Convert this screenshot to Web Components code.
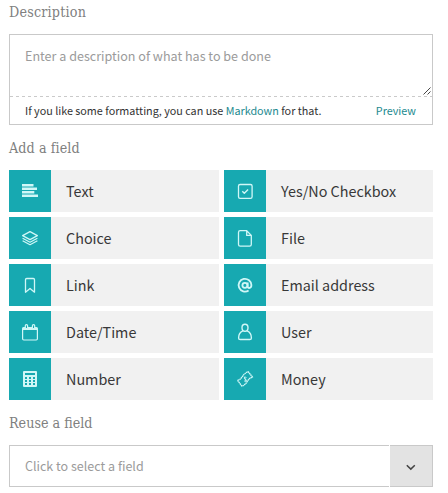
<!DOCTYPE html>
<html lang="en">
<head>
<meta charset="utf-8">
<title>Add fields</title>
<style>
  body { margin: 0; background: #fff; font-family: "Noto Sans CJK SC", "Noto Sans", sans-serif; color: #3a3a3a; }
</style>
</head>
<body>
<field-builder></field-builder>

<script>
const ICONS = {
  text: '<g fill="currentColor" stroke="none"><path d="M13 14h11.5v2.5H13zM13 17.5h15V20H13zM13 21h12.3v2.4H13zM13 24.4h16v2.5H13z"/></g>',
  choice: '<path d="M21 14.6l7.4 4-7.4 4-7.4-4zM13.6 21.2l7.4 4 7.4-4M13.6 23.7l7.4 4 7.4-4"/>',
  link: '<path d="M17.7 14.5h6.6q1.2 0 1.2 1.2v12.5L21 24.5l-4.5 3.7V15.7q0-1.2 1.2-1.2z" stroke-width="1.3"/>',
  date: '<rect x="13.6" y="16.6" width="14.8" height="12.4" rx="1.2"/><path d="M13.6 16.6h14.8v2.4H13.6z" fill="currentColor" stroke="none"/><rect x="16.3" y="13.6" width="2.3" height="4" rx="1.1" fill="#17a9b1"/><rect x="23.4" y="13.6" width="2.3" height="4" rx="1.1" fill="#17a9b1"/>',
  number: '<path fill="currentColor" stroke="none" fill-rule="evenodd" d="M15 13h12q1 0 1 1v14q0 1-1 1H15q-1 0-1-1V14q0-1 1-1zM16 15v2h10v-2zM16 19v2h2v-2zM20 19v2h2v-2zM24 19v2h2v-2zM16 22v2h2v-2zM20 22v2h2v-2zM24 22v2h2v-2zM16 25v2h2v-2zM20 25v2h2v-2zM24 25v2h2v-2z"/>',
  check: '<rect x="14.5" y="14.5" width="13.6" height="13.8" rx="1.6" stroke-width="1.3"/><path d="M18.3 21.2l2 2 3.8-3.8" stroke-width="1.4"/>',
  file: '<path d="M22.7 13.7h-6.5q-1.7 0-1.7 1.7v12q0 1.7 1.7 1.7h9.4q1.7 0 1.7-1.7v-9zM22.7 13.7v4.7h4.6" stroke-width="1.3"/>',
  email: '<g stroke-width="1.8"><circle cx="20.9" cy="21.3" r="2.5"/><path d="M23.7 18.4v3.8q0 1.8 1.6 1.8 2.1 0 2.1-2.9a6.4 6.4 0 1 0-2.8 5.4"/></g>',
  user: '<g stroke-width="1.4"><ellipse cx="21" cy="16.7" rx="3" ry="3.5"/><path d="M18.8 19.8c-2.7 1.2-4.2 3.5-4.2 7.1q0 1.6 1.7 1.6h9.4q1.7 0 1.7-1.6c0-3.6-1.5-5.9-4.2-7.1"/></g>',
  money: '<path d="M13.5 22.3c2.3-.5 3.5-1.7 4.8-3.7 1.4-2.2 3.2-3.8 5.8-4.9l4.5 5.4c-2.6.7-4 2.1-5.2 4.1-1.4 2.4-3 4-5.5 5z" stroke-dasharray="1.6 .35" stroke-width="1.3"/><path d="M22.5 19.6q-1.4-1-2.2.1-.4.9 1 1.4 1.5.6 1 1.7-.8 1.1-2.2.1M20.3 18.6l1.8 5" stroke-width=".9"/>'
};

function attach(host, markup) {
  const template = document.createElement('template');
  template.innerHTML = markup;
  host.attachShadow({ mode: 'open' }).appendChild(template.content.cloneNode(true));
}

class FormSection extends HTMLElement {
  constructor() {
    super();
    attach(this, `
      <style>
        :host { display: block; }
        h2 { margin: 0 0 10px; height: 24px; font: 400 14.2px/24px "DejaVu Serif Condensed", "DejaVu Serif", serif;
             font-stretch: condensed; letter-spacing: var(--title-tracking, 0); color: #808080; white-space: nowrap; }
      </style>
      <h2><slot name="title"></slot></h2>
      <slot></slot>`);
  }
}

class DescriptionBox extends HTMLElement {
  constructor() {
    super();
    attach(this, `
      <style>
        :host { display: flex; flex-direction: column; box-sizing: border-box; height: 91px; border: 1px solid #c9c9c9; }
        .input { flex: 1; display: flex; justify-content: space-between; padding: 10px 1px 0 15px; color: #9b9b9b;
                 font-size: 12.57px; line-height: 22px; }
        .grip { align-self: flex-end; display: block; margin-bottom: 1px; }
        .dash { height: 1px; background: repeating-linear-gradient(90deg, #cacaca 0 3px, transparent 3px 6px); }
        .hint { display: flex; justify-content: space-between; padding: 0 16px 0 15px; height: 27px;
                font-size: 10.79px; line-height: 27px; color: #333; white-space: nowrap; }
        a { color: #1d8a8f; }
      </style>
      <div class="input"><span>Enter a description of what has to be done</span>
        <svg class="grip" width="8" height="8" viewBox="0 0 8 8" fill="none" stroke="#333" stroke-width=".9"><path d="M.5 7.5l7-7M4.5 7.5l3-3"/></svg>
      </div>
      <div class="dash"></div>
      <div class="hint"><span>If you like some formatting, you can use <a>Markdown</a> for that.</span><a>Preview</a></div>`);
  }
}

class FieldButton extends HTMLElement {
  constructor() {
    super();
    attach(this, `
      <style>
        :host { display: flex; height: 42px; background: #f1f1f1; }
        .icon { width: 42px; height: 42px; background: #17a9b1; color: #d0f7f7; }
        svg { display: block; }
        .label { padding-left: 15px; font-size: 14.37px; line-height: 42px; color: #383838; white-space: nowrap; }
      </style>
      <div class="icon"><svg width="42" height="42" viewBox="0 0 42 42" fill="none" stroke="currentColor" stroke-width="1.2" stroke-linejoin="round">${ICONS[this.getAttribute('icon')] || ''}</svg></div>
      <div class="label"><slot></slot></div>`);
  }
}

class FieldSelect extends HTMLElement {
  constructor() {
    super();
    attach(this, `
      <style>
        :host { display: flex; gap: 1px; height: 42px; }
        .value { flex: 1; box-sizing: border-box; border: 1px solid #c9c9c9; border-right: 0; padding-left: 15px;
                 font-size: 12.52px; line-height: 40px; color: #9b9b9b; }
        .toggle { box-sizing: border-box; width: 43px; display: grid; place-items: center; background: #e3e3e3;
                  border: 1px solid #c9c9c9; border-left: 0; }
        svg { display: block; margin-top: 3px; }
      </style>
      <div class="value"><slot></slot></div>
      <div class="toggle"><svg width="10" height="7" viewBox="0 0 10 7" fill="none" stroke="#444" stroke-width="1.5"><path d="M.8 1.2l4 3.9 4-3.9"/></svg></div>`);
  }
}

class FieldBuilder extends HTMLElement {
  constructor() {
    super();
    attach(this, `
      <style>
        :host { display: flex; flex-direction: column; gap: 11px; width: 424px; margin-left: 9px; }
        .grid { display: grid; grid-template-columns: 210px 209px; gap: 5px; }
        .description { --title-tracking: .2px; }
        .add { --title-tracking: .08px; }
      </style>
      <form-section class="description"><span slot="title">Description</span><description-box></description-box></form-section>
      <form-section class="add"><span slot="title">Add a field</span>
        <div class="grid">
          <field-button icon="text">Text</field-button>
          <field-button icon="check">Yes/No Checkbox</field-button>
          <field-button icon="choice">Choice</field-button>
          <field-button icon="file">File</field-button>
          <field-button icon="link">Link</field-button>
          <field-button icon="email">Email address</field-button>
          <field-button icon="date">Date/Time</field-button>
          <field-button icon="user">User</field-button>
          <field-button icon="number">Number</field-button>
          <field-button icon="money">Money</field-button>
        </div>
      </form-section>
      <form-section><span slot="title">Reuse a field</span><field-select>Click to select a field</field-select></form-section>`);
  }
}

customElements.define('form-section', FormSection);
customElements.define('description-box', DescriptionBox);
customElements.define('field-button', FieldButton);
customElements.define('field-select', FieldSelect);
customElements.define('field-builder', FieldBuilder);
</script>
</body>
</html>
